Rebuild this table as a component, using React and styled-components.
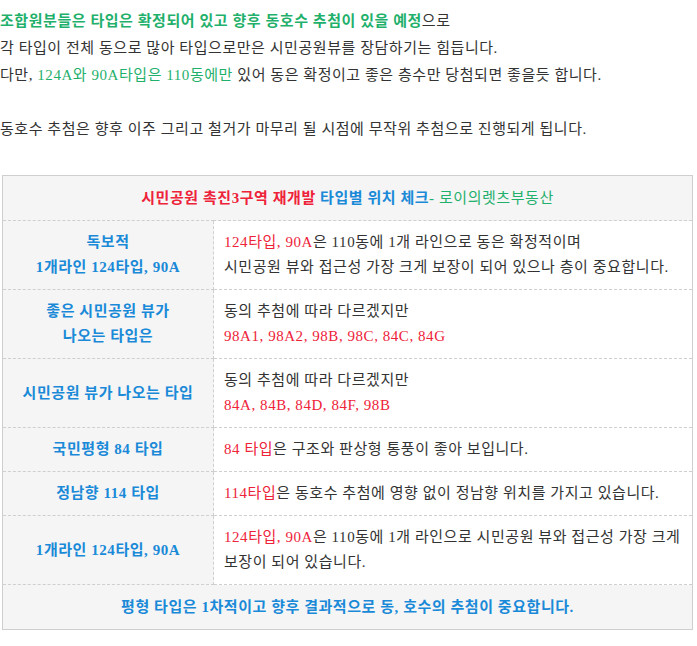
import React from 'react';
import styled, { createGlobalStyle } from 'styled-components';

const COLORS = {
  text: '#333333',
  green: '#1fb06c',
  red: '#ee2239',
  blue: '#1a8ad8',
  line: '#cfcfcf',
  shade: '#f5f5f5',
};

const GlobalStyle = createGlobalStyle`
  body {
    margin: 0;
    background: #ffffff;
    font-family: "Liberation Serif", "Noto Sans CJK KR", serif;
    font-size: 15px;
    letter-spacing: 0.55px;
    color: ${COLORS.text};
  }
`;

const rows = [
  {
    title: ['독보적', '1개라인 124타입, 90A'],
    body: (
      <>
        <Red>124타입, 90A</Red>은 110동에 1개 라인으로 동은 확정적이며
        <br />
        시민공원 뷰와 접근성 가장 크게 보장이 되어 있으나 층이 중요합니다.
      </>
    ),
  },
  {
    title: ['좋은 시민공원 뷰가', '나오는 타입은'],
    body: (
      <>
        동의 추첨에 따라 다르겠지만
        <br />
        <Red>98A1, 98A2, 98B, 98C, 84C, 84G</Red>
      </>
    ),
  },
  {
    title: ['시민공원 뷰가 나오는 타입'],
    body: (
      <>
        동의 추첨에 따라 다르겠지만
        <br />
        <Red>84A, 84B, 84D, 84F, 98B</Red>
      </>
    ),
  },
  {
    title: ['국민평형 84 타입'],
    body: (
      <>
        <Red>84 타입</Red>은 구조와 판상형 통풍이 좋아 보입니다.
      </>
    ),
  },
  {
    title: ['정남향 114 타입'],
    body: (
      <>
        <Red>114타입</Red>은 동호수 추첨에 영향 없이 정남향 위치를 가지고 있습니다.
      </>
    ),
  },
  {
    title: ['1개라인 124타입, 90A'],
    body: (
      <>
        <Red>124타입, 90A</Red>은 110동에 1개 라인으로 시민공원 뷰와 접근성 가장 크게
        <br />
        보장이 되어 있습니다.
      </>
    ),
  },
];

const App = () => {
  return (
    <Page>
      <GlobalStyle />
      <Intro>
        <Strong color={COLORS.green}>조합원분들은 타입은 확정되어 있고 향후 동호수 추첨이 있을 예정</Strong>으로
        <br />
        각 타입이 전체 동으로 많아 타입으로만은 시민공원뷰를 장담하기는 힘듭니다.
        <br />
        다만, <Green>124A와 90A타입은 110동에만</Green> 있어 동은 확정이고 좋은 층수만 당첨되면 좋을듯 합니다.
        <br />
        <br />
        동호수 추첨은 향후 이주 그리고 철거가 마무리 될 시점에 무작위 추첨으로 진행되게 됩니다.
      </Intro>

      <Table>
        <colgroup>
          <col style={{ width: 211 }} />
          <col />
        </colgroup>
        <tbody>
          <tr>
            <HeadCell colSpan={2}>
              <Strong color={COLORS.red}>시민공원 촉진3구역 재개발 </Strong>
              <Strong color={COLORS.blue}>타입별 위치 체크</Strong>
              <Green>- 로이의렛츠부동산</Green>
            </HeadCell>
          </tr>
          {rows.map((row, i) => (
            <tr key={i}>
              <TitleCell>
                {row.title.map((t, j) => (
                  <React.Fragment key={j}>
                    {j > 0 && <br />}
                    {t}
                  </React.Fragment>
                ))}
              </TitleCell>
              <BodyCell>{row.body}</BodyCell>
            </tr>
          ))}
          <tr>
            <HeadCell colSpan={2}>
              <Strong color={COLORS.blue}>평형 타입은 1차적이고 향후 결과적으로 동, 호수의 추첨이 중요합니다.</Strong>
            </HeadCell>
          </tr>
        </tbody>
      </Table>
    </Page>
  );
};

const Page = styled.div`
  width: 697px;
  padding-top: 8px;
`;

const Intro = styled.p`
  margin: 0 0 32px;
  line-height: 27px;
  white-space: nowrap;
`;

const Strong = styled.b`
  font-weight: bold;
  color: ${(p) => p.color};
`;

const Green = styled.span`
  color: ${COLORS.green};
`;

function Red({ children }) {
  return <RedText>{children}</RedText>;
}

const RedText = styled.span`
  color: ${COLORS.red};
`;

const Table = styled.table`
  margin-left: 2px;
  width: 691px;
  table-layout: fixed;
  border-collapse: collapse;
  border: 1px solid ${COLORS.line};
  line-height: 25px;
  td {
    border: 1px dashed ${COLORS.line};
  }
`;

const HeadCell = styled.td`
  height: 44px;
  padding: 0 10px;
  text-align: center;
  background: ${COLORS.shade};
`;

const TitleCell = styled.td`
  padding: 9px 10px;
  text-align: center;
  vertical-align: middle;
  font-weight: bold;
  color: ${COLORS.blue};
  background: ${COLORS.shade};
`;

const BodyCell = styled.td`
  padding: 9px 10px;
  text-align: left;
  vertical-align: middle;
  white-space: nowrap;
  background: #ffffff;
`;

export default App;
